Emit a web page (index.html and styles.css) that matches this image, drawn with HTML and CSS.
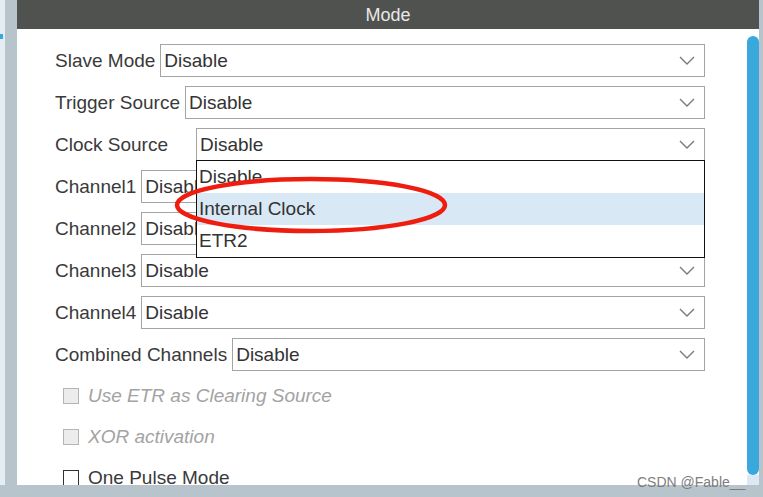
FILE: index.html
```html
<!DOCTYPE html>
<html lang="en">
<head>
  <meta charset="UTF-8">
  <title>Mode</title>
  <link rel="stylesheet" href="styles.css">
</head>
<body>
  <div class="frame">
    <div class="edge"><span class="edge-mark"></span></div>
    <div class="panel">
      <div class="panel-title">Mode</div>
      <div class="panel-body">
        <div class="form">
          <div class="row">
            <span class="label">Slave Mode</span>
            <div class="select"><span>Disable</span><svg class="chev" width="16" height="9" viewBox="0 0 16 9"><path d="M1 1 L8 8 L15 1" /></svg></div>
          </div>
          <div class="row">
            <span class="label">Trigger Source</span>
            <div class="select"><span>Disable</span><svg class="chev" width="16" height="9" viewBox="0 0 16 9"><path d="M1 1 L8 8 L15 1" /></svg></div>
          </div>
          <div class="row">
            <span class="label label-clock">Clock Source</span>
            <div class="select">
              <span>Disable</span><svg class="chev" width="16" height="9" viewBox="0 0 16 9"><path d="M1 1 L8 8 L15 1" /></svg>
              <ul class="options">
                <li>Disable</li>
                <li class="active">Internal Clock</li>
                <li>ETR2</li>
              </ul>
            </div>
          </div>
          <div class="row">
            <span class="label">Channel1</span>
            <div class="select"><span>Disable</span><svg class="chev" width="16" height="9" viewBox="0 0 16 9"><path d="M1 1 L8 8 L15 1" /></svg></div>
          </div>
          <div class="row">
            <span class="label">Channel2</span>
            <div class="select"><span>Disable</span><svg class="chev" width="16" height="9" viewBox="0 0 16 9"><path d="M1 1 L8 8 L15 1" /></svg></div>
          </div>
          <div class="row">
            <span class="label">Channel3</span>
            <div class="select"><span>Disable</span><svg class="chev" width="16" height="9" viewBox="0 0 16 9"><path d="M1 1 L8 8 L15 1" /></svg></div>
          </div>
          <div class="row">
            <span class="label">Channel4</span>
            <div class="select"><span>Disable</span><svg class="chev" width="16" height="9" viewBox="0 0 16 9"><path d="M1 1 L8 8 L15 1" /></svg></div>
          </div>
          <div class="row">
            <span class="label">Combined Channels</span>
            <div class="select"><span>Disable</span><svg class="chev" width="16" height="9" viewBox="0 0 16 9"><path d="M1 1 L8 8 L15 1" /></svg></div>
          </div>
          <div class="check-row disabled"><span class="box"></span><span>Use ETR as Clearing Source</span></div>
          <div class="check-row disabled"><span class="box"></span><span>XOR activation</span></div>
          <div class="check-row"><span class="box"></span><span>One Pulse Mode</span></div>
        </div>
        <div class="scrollbar">
          <div class="thumb"></div>
          <div class="track-end"></div>
        </div>
      </div>
    </div>
  </div>

  <svg class="mark" width="290" height="70" viewBox="0 0 290 70">
    <ellipse cx="141" cy="35" rx="134" ry="26" />
  </svg>

  <div class="watermark">CSDN @Fable__</div>
</body>
</html>
```

FILE: styles.css
```css
body { margin: 0; width: 763px; height: 497px; overflow: hidden; background: #b8c4cb; font-family: "Liberation Sans", Arial, sans-serif; position: relative; }
.frame { display: flex; height: 485px; }
.edge { width: 5px; margin-right: 12px; background: #e4edf2; }
.edge-mark { display: block; width: 3px; height: 5px; margin-top: 34px; background: #3aa8dc; }
.panel { flex: 0 0 742px; display: flex; flex-direction: column; }
.panel-title { height: 29px; line-height: 30px; background: #505250; color: #e8e8e8; text-align: center; font-size: 18px; }
.panel-body { flex: 1; display: flex; background: #fff; overflow: hidden; }
.form { flex: 1; padding: 15px 42px 0 38px; display: flex; flex-direction: column; gap: 9px; }
.row { display: flex; align-items: center; height: 33px; gap: 5px; flex-shrink: 0; }
.label { color: #3a3a3a; font-size: 19px; white-space: nowrap; }
.label-clock { width: 136px; }
.select { flex: 1; height: 33px; box-sizing: border-box; border: 1px solid #a4a4a4; display: flex; align-items: center; justify-content: space-between; padding: 0 9px 0 3px; color: #333; font-size: 19px; position: relative; background: #fff; }
.chev path { fill: none; stroke: #7a7a7a; stroke-width: 1.4; }
.options { position: absolute; top: 100%; left: -1px; right: -1px; margin: 0; padding: 0; list-style: none; border: 1px solid #111; background: #fff; z-index: 2; }
.options li { height: 32px; line-height: 32px; padding-left: 2px; color: #333; }
.options li.active { background: #d9e8f5; }
.check-row { display: flex; align-items: center; height: 32px; gap: 9px; padding-left: 8px; font-size: 19px; color: #3a3a3a; flex-shrink: 0; }
.box { width: 16px; height: 16px; box-sizing: border-box; border: 1px solid #333; background: #fff; }
.check-row.disabled { color: #a3a3a3; font-style: italic; }
.check-row.disabled .box { border-color: #b4b4b4; background: #ececec; font-style: normal; }
.scrollbar { width: 12px; display: flex; flex-direction: column; padding-top: 7px; }
.thumb { flex: 1; background: #39a8dc; border-radius: 6px; }
.track-end { height: 10px; background: #dbe9f6; }
.mark { position: absolute; left: 170px; top: 170px; z-index: 3; }
.mark ellipse { fill: none; stroke: #ee1d10; stroke-width: 4.5; }
.watermark { position: absolute; left: 637px; top: 474px; font-size: 14px; color: #7d7d7d; }
```
